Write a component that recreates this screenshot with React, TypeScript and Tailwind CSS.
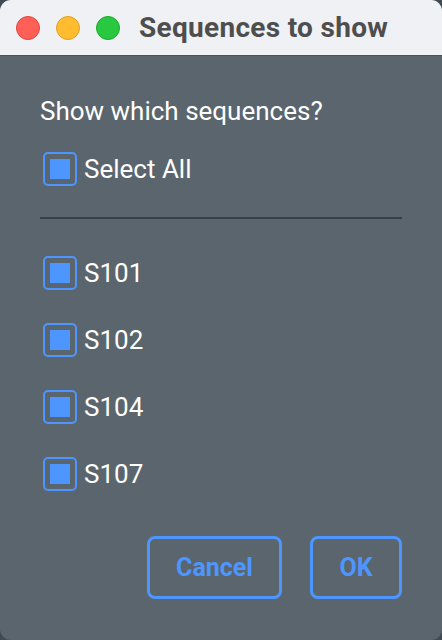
import React, { useState } from "react";

const sequences = ["S101", "S102", "S104", "S107"];

function Checkbox({ checked, onChange }: { checked: boolean; onChange: () => void }) {
  return (
    <button
      onClick={onChange}
      className="w-[34px] h-[34px] rounded-[5px] border-2 border-[#4d96ff] flex items-center justify-center shrink-0"
    >
      {checked && <span className="w-[20px] h-[20px] bg-[#4d96ff]" />}
    </button>
  );
}

export default function App() {
  const [selected, setSelected] = useState<string[]>(sequences);
  const allSelected = selected.length === sequences.length;

  const toggle = (s: string) =>
    setSelected((prev) => (prev.includes(s) ? prev.filter((x) => x !== s) : [...prev, s]));

  return (
    <div className="w-[442px] h-[640px] bg-[#414a52] font-['Roboto',sans-serif]">
      <div className="w-full h-full rounded-[11px] overflow-hidden bg-[#5a656d] flex flex-col">
        {/* title bar */}
        <div className="h-[56px] bg-[#f0f1f4] border-b border-[#4a545b] flex items-center pl-[16px]">
          <div className="flex gap-[16px]">
            <span className="w-[24px] h-[24px] rounded-full bg-[#fe5f57] border border-[#e0443e]" />
            <span className="w-[24px] h-[24px] rounded-full bg-[#febc2e] border border-[#dea123]" />
            <span className="w-[24px] h-[24px] rounded-full bg-[#28c840] border border-[#1aab29]" />
          </div>
          <h1 className="ml-[19px] text-[28px] leading-[32px] font-bold text-[#4e4e4e] tracking-[0.3px]">
            Sequences to show
          </h1>
        </div>

        {/* body */}
        <div className="flex-1 flex flex-col px-[40px] pt-[40px]">
          <p className="text-[26px] leading-[30px] text-white">Show which sequences?</p>

          <div className="mt-[26px] flex items-center gap-[7px] pl-[3px]">
            <Checkbox
              checked={allSelected}
              onChange={() => setSelected(allSelected ? [] : sequences)}
            />
            <span className="text-[26px] leading-[30px] text-white">Select All</span>
          </div>

          <div className="mt-[31px] h-[2px] bg-[#383f45]" />

          <div className="mt-[37px] flex flex-col gap-[33px] pl-[3px]">
            {sequences.map((s) => (
              <div key={s} className="flex items-center gap-[7px]">
                <Checkbox checked={selected.includes(s)} onChange={() => toggle(s)} />
                <span className="text-[26px] leading-[30px] text-white">{s}</span>
              </div>
            ))}
          </div>

          <div className="mt-auto mb-[41px] flex justify-end gap-[28px]">
            <button className="w-[135px] h-[63px] rounded-[8px] border-[3px] border-[#4d96ff] text-[25px] font-bold text-[#4d96ff]">
              Cancel
            </button>
            <button className="w-[92px] h-[63px] rounded-[8px] border-[3px] border-[#4d96ff] text-[25px] font-bold text-[#4d96ff]">
              OK
            </button>
          </div>
        </div>
      </div>
    </div>
  );
}
